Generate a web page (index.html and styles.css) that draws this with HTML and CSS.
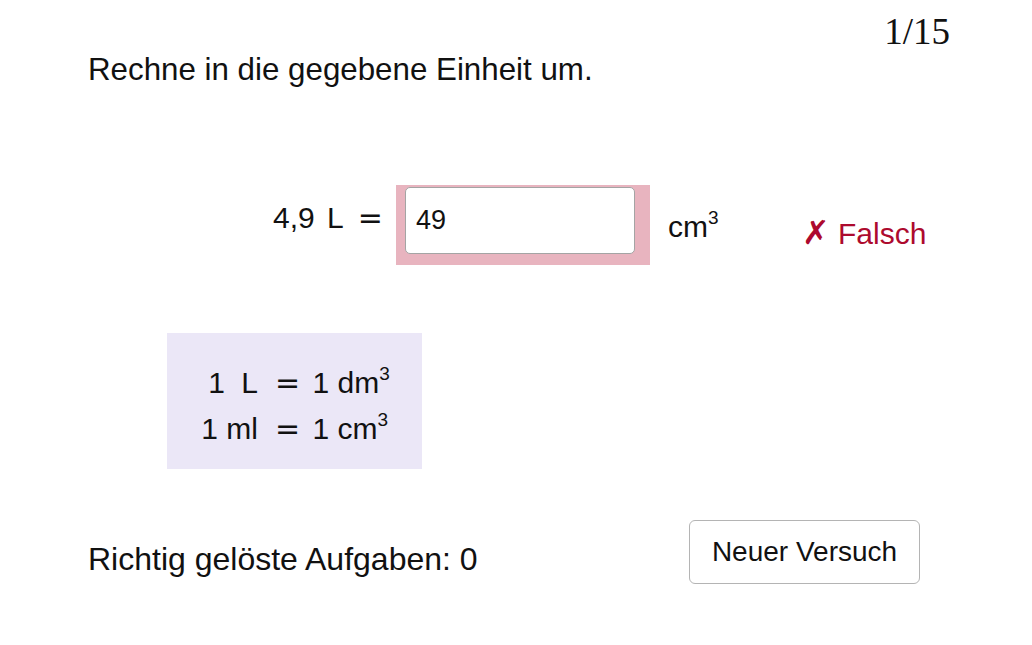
FILE: index.html
```html
<!DOCTYPE html>
<html lang="de">
<head>
<meta charset="utf-8">
<title>Einheiten umrechnen</title>
<link rel="stylesheet" href="styles.css">
</head>
<body>
<div class="page">
  <div class="counter">1/15</div>
  <h1 class="task">Rechne in die gegebene Einheit um.</h1>

  <div class="exercise">
    <div class="expr"><span>4,9 <span class="gap">L</span></span><span class="eq">=</span></div>
    <div class="answer-wrap">
      <input class="answer" type="text" value="49">
    </div>
    <div class="unit">cm<span class="sup">3</span></div>
    <div class="result"><span class="cross">✗</span> Falsch</div>
  </div>

  <div class="hint">
    <div class="hint-grid">
      <span class="lhs">1 <span class="gap">L</span></span><span class="rhs"><span class="eq">=</span> 1 dm<span class="sup">3</span></span>
      <span class="lhs">1 ml</span><span class="rhs"><span class="eq">=</span> 1 cm<span class="sup">3</span></span>
    </div>
  </div>

  <div class="footer">
    <div class="score">Richtig gelöste Aufgaben: 0</div>
    <button class="retry" type="button">Neuer Versuch</button>
  </div>
</div>
</body>
</html>
```
FILE: styles.css
```css
html, body {
  margin: 0;
  padding: 0;
  background: #ffffff;
}

body {
  font-family: "Liberation Sans", Arial, sans-serif;
  color: #111111;
}

.page {
  width: 1032px;
  height: 645px;
  box-sizing: border-box;
  padding: 0 82px 0 88px;
  display: flex;
  flex-direction: column;
}

.counter {
  font-family: "Liberation Serif", "Times New Roman", serif;
  font-size: 37px;
  line-height: 37px;
  text-align: right;
  padding-top: 13px;
}

.task {
  margin: 4px 0 0 0;
  font-weight: normal;
  font-size: 31.3px;
  line-height: 31px;
}

.exercise {
  margin-top: 100px;
  display: flex;
  align-items: flex-start;
  height: 80px;
}

.expr {
  margin-left: 185px;
  width: 110px;
  margin-right: 13px;
  margin-top: 18px;
  display: flex;
  justify-content: space-between;
  font-size: 30px;
  line-height: 30px;
  white-space: nowrap;
}

.eq {
  font-family: "DejaVu Sans", sans-serif;
  font-size: 30px;
}

.answer-wrap {
  background: #e8b4bf;
  padding: 2px 15px 11px 9px;
  display: flex;
}

.answer {
  width: 230px;
  height: 67px;
  box-sizing: border-box;
  margin: 0;
  border: 1px solid #a4a4a4;
  border-radius: 5px;
  background: #ffffff;
  padding: 0 10px;
  font-family: "Liberation Sans", Arial, sans-serif;
  font-size: 27px;
  color: #111111;
  outline: none;
}

.unit {
  margin-left: 18px;
  width: 134px;
  margin-top: 27px;
  font-size: 30px;
  line-height: 30px;
}

.sup {
  font-size: 19px;
  line-height: 0;
  vertical-align: 13px;
}

.result {
  margin-top: 33px;
  font-size: 30px;
  line-height: 30px;
  color: #ad0a2e;
  white-space: nowrap;
}

.cross {
  font-family: "DejaVu Sans", sans-serif;
  font-size: 33px;
  font-weight: bold;
}

.hint {
  margin-top: 68px;
  margin-left: 79px;
  width: 255px;
  height: 136px;
  box-sizing: border-box;
  background: #ebe7f7;
  padding-top: 27px;
}

.hint-grid {
  display: grid;
  grid-template-columns: 91px auto;
  column-gap: 17px;
  font-size: 30px;
  line-height: 46px;
}

.gap {
  margin-left: 4px;
}

.lhs {
  text-align: right;
  white-space: nowrap;
}

.lhs .gap {
  margin-left: 8px;
}

.rhs {
  white-space: nowrap;
}

.rhs .eq {
  margin-right: 4px;
}

.footer {
  margin-top: 51px;
  display: flex;
  justify-content: space-between;
  align-items: flex-start;
}

.score {
  margin-top: 23px;
  font-size: 32px;
  line-height: 32px;
}

.retry {
  width: 231px;
  height: 64px;
  margin: 0 30px 0 0;
  padding: 0;
  box-sizing: border-box;
  background: #ffffff;
  border: 1px solid #b4b4b4;
  border-radius: 6px;
  font-family: "Liberation Sans", Arial, sans-serif;
  font-size: 28px;
  color: #111111;
}
```
